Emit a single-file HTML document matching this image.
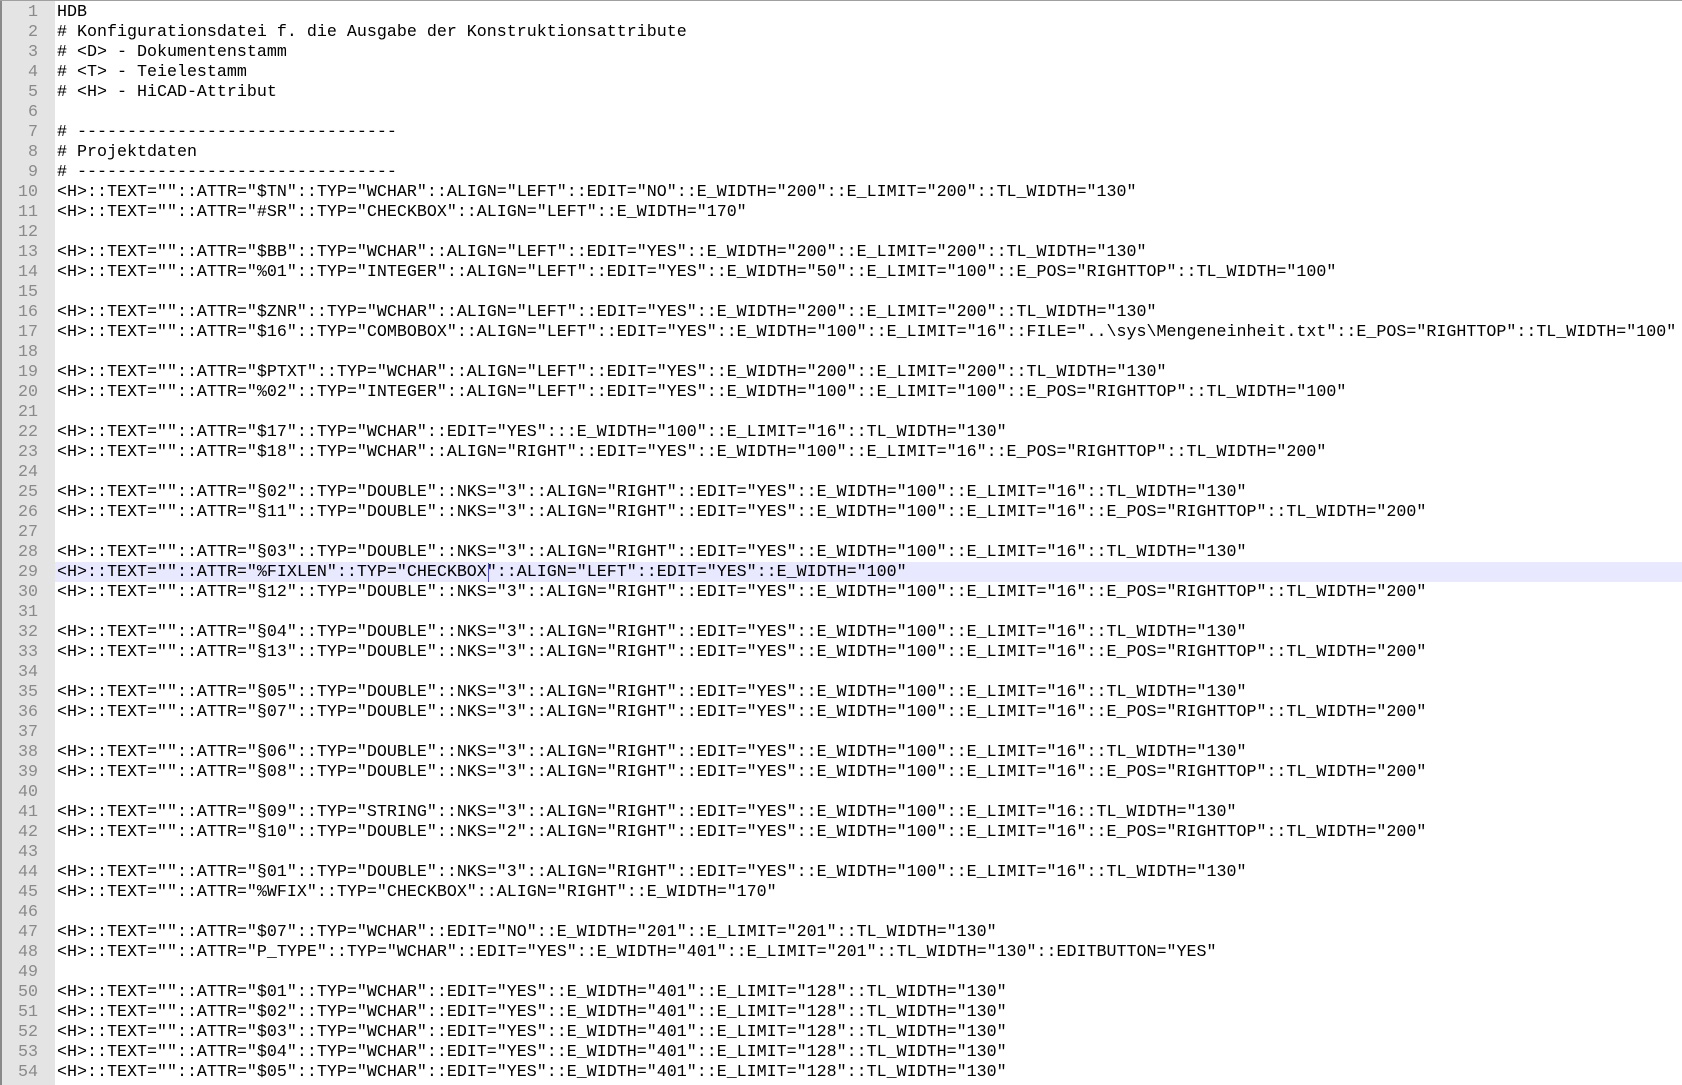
<!DOCTYPE html>
<html><head><meta charset="utf-8">
<style>
html,body{margin:0;padding:0;background:#fff;width:1682px;height:1085px;overflow:hidden}
#wrap{position:relative;width:1682px;height:1085px;border-top:1px solid #a0a0a0;box-sizing:border-box}
#gut{position:absolute;left:0;top:0;width:55px;height:1085px;background:#e4e4e4;border-left:2px solid #8a8a8a;box-sizing:border-box}
.ln,.tx{font-family:"Liberation Mono","Courier New",monospace;font-size:16.67px;line-height:20px;white-space:pre;margin:0}
#nums{position:absolute;left:0;top:2px;width:38px;text-align:right;color:#8a8a8a}
#hl{position:absolute;left:55px;top:561px;width:1627px;height:20px;background:#e8e8ff}
#code{position:absolute;left:57px;top:2px;color:#000}
#cur{position:absolute;left:488px;top:562px;width:1px;height:19px;background:#5050c0}
</style></head><body><div id="wrap">
<div id="gut"></div>
<div id="hl"></div>
<pre class="ln" id="nums">1
2
3
4
5
6
7
8
9
10
11
12
13
14
15
16
17
18
19
20
21
22
23
24
25
26
27
28
29
30
31
32
33
34
35
36
37
38
39
40
41
42
43
44
45
46
47
48
49
50
51
52
53
54</pre>
<pre class="tx" id="code">HDB
# Konfigurationsdatei f. die Ausgabe der Konstruktionsattribute
# &lt;D&gt; - Dokumentenstamm
# &lt;T&gt; - Teielestamm
# &lt;H&gt; - HiCAD-Attribut

# --------------------------------
# Projektdaten
# --------------------------------
&lt;H&gt;::TEXT=""::ATTR="$TN"::TYP="WCHAR"::ALIGN="LEFT"::EDIT="NO"::E_WIDTH="200"::E_LIMIT="200"::TL_WIDTH="130"
&lt;H&gt;::TEXT=""::ATTR="#SR"::TYP="CHECKBOX"::ALIGN="LEFT"::E_WIDTH="170"

&lt;H&gt;::TEXT=""::ATTR="$BB"::TYP="WCHAR"::ALIGN="LEFT"::EDIT="YES"::E_WIDTH="200"::E_LIMIT="200"::TL_WIDTH="130"
&lt;H&gt;::TEXT=""::ATTR="%01"::TYP="INTEGER"::ALIGN="LEFT"::EDIT="YES"::E_WIDTH="50"::E_LIMIT="100"::E_POS="RIGHTTOP"::TL_WIDTH="100"

&lt;H&gt;::TEXT=""::ATTR="$ZNR"::TYP="WCHAR"::ALIGN="LEFT"::EDIT="YES"::E_WIDTH="200"::E_LIMIT="200"::TL_WIDTH="130"
&lt;H&gt;::TEXT=""::ATTR="$16"::TYP="COMBOBOX"::ALIGN="LEFT"::EDIT="YES"::E_WIDTH="100"::E_LIMIT="16"::FILE="..\sys\Mengeneinheit.txt"::E_POS="RIGHTTOP"::TL_WIDTH="100"

&lt;H&gt;::TEXT=""::ATTR="$PTXT"::TYP="WCHAR"::ALIGN="LEFT"::EDIT="YES"::E_WIDTH="200"::E_LIMIT="200"::TL_WIDTH="130"
&lt;H&gt;::TEXT=""::ATTR="%02"::TYP="INTEGER"::ALIGN="LEFT"::EDIT="YES"::E_WIDTH="100"::E_LIMIT="100"::E_POS="RIGHTTOP"::TL_WIDTH="100"

&lt;H&gt;::TEXT=""::ATTR="$17"::TYP="WCHAR"::EDIT="YES":::E_WIDTH="100"::E_LIMIT="16"::TL_WIDTH="130"
&lt;H&gt;::TEXT=""::ATTR="$18"::TYP="WCHAR"::ALIGN="RIGHT"::EDIT="YES"::E_WIDTH="100"::E_LIMIT="16"::E_POS="RIGHTTOP"::TL_WIDTH="200"

&lt;H&gt;::TEXT=""::ATTR="§02"::TYP="DOUBLE"::NKS="3"::ALIGN="RIGHT"::EDIT="YES"::E_WIDTH="100"::E_LIMIT="16"::TL_WIDTH="130"
&lt;H&gt;::TEXT=""::ATTR="§11"::TYP="DOUBLE"::NKS="3"::ALIGN="RIGHT"::EDIT="YES"::E_WIDTH="100"::E_LIMIT="16"::E_POS="RIGHTTOP"::TL_WIDTH="200"

&lt;H&gt;::TEXT=""::ATTR="§03"::TYP="DOUBLE"::NKS="3"::ALIGN="RIGHT"::EDIT="YES"::E_WIDTH="100"::E_LIMIT="16"::TL_WIDTH="130"
&lt;H&gt;::TEXT=""::ATTR="%FIXLEN"::TYP="CHECKBOX"::ALIGN="LEFT"::EDIT="YES"::E_WIDTH="100"
&lt;H&gt;::TEXT=""::ATTR="§12"::TYP="DOUBLE"::NKS="3"::ALIGN="RIGHT"::EDIT="YES"::E_WIDTH="100"::E_LIMIT="16"::E_POS="RIGHTTOP"::TL_WIDTH="200"

&lt;H&gt;::TEXT=""::ATTR="§04"::TYP="DOUBLE"::NKS="3"::ALIGN="RIGHT"::EDIT="YES"::E_WIDTH="100"::E_LIMIT="16"::TL_WIDTH="130"
&lt;H&gt;::TEXT=""::ATTR="§13"::TYP="DOUBLE"::NKS="3"::ALIGN="RIGHT"::EDIT="YES"::E_WIDTH="100"::E_LIMIT="16"::E_POS="RIGHTTOP"::TL_WIDTH="200"

&lt;H&gt;::TEXT=""::ATTR="§05"::TYP="DOUBLE"::NKS="3"::ALIGN="RIGHT"::EDIT="YES"::E_WIDTH="100"::E_LIMIT="16"::TL_WIDTH="130"
&lt;H&gt;::TEXT=""::ATTR="§07"::TYP="DOUBLE"::NKS="3"::ALIGN="RIGHT"::EDIT="YES"::E_WIDTH="100"::E_LIMIT="16"::E_POS="RIGHTTOP"::TL_WIDTH="200"

&lt;H&gt;::TEXT=""::ATTR="§06"::TYP="DOUBLE"::NKS="3"::ALIGN="RIGHT"::EDIT="YES"::E_WIDTH="100"::E_LIMIT="16"::TL_WIDTH="130"
&lt;H&gt;::TEXT=""::ATTR="§08"::TYP="DOUBLE"::NKS="3"::ALIGN="RIGHT"::EDIT="YES"::E_WIDTH="100"::E_LIMIT="16"::E_POS="RIGHTTOP"::TL_WIDTH="200"

&lt;H&gt;::TEXT=""::ATTR="§09"::TYP="STRING"::NKS="3"::ALIGN="RIGHT"::EDIT="YES"::E_WIDTH="100"::E_LIMIT="16::TL_WIDTH="130"
&lt;H&gt;::TEXT=""::ATTR="§10"::TYP="DOUBLE"::NKS="2"::ALIGN="RIGHT"::EDIT="YES"::E_WIDTH="100"::E_LIMIT="16"::E_POS="RIGHTTOP"::TL_WIDTH="200"

&lt;H&gt;::TEXT=""::ATTR="§01"::TYP="DOUBLE"::NKS="3"::ALIGN="RIGHT"::EDIT="YES"::E_WIDTH="100"::E_LIMIT="16"::TL_WIDTH="130"
&lt;H&gt;::TEXT=""::ATTR="%WFIX"::TYP="CHECKBOX"::ALIGN="RIGHT"::E_WIDTH="170"

&lt;H&gt;::TEXT=""::ATTR="$07"::TYP="WCHAR"::EDIT="NO"::E_WIDTH="201"::E_LIMIT="201"::TL_WIDTH="130"
&lt;H&gt;::TEXT=""::ATTR="P_TYPE"::TYP="WCHAR"::EDIT="YES"::E_WIDTH="401"::E_LIMIT="201"::TL_WIDTH="130"::EDITBUTTON="YES"

&lt;H&gt;::TEXT=""::ATTR="$01"::TYP="WCHAR"::EDIT="YES"::E_WIDTH="401"::E_LIMIT="128"::TL_WIDTH="130"
&lt;H&gt;::TEXT=""::ATTR="$02"::TYP="WCHAR"::EDIT="YES"::E_WIDTH="401"::E_LIMIT="128"::TL_WIDTH="130"
&lt;H&gt;::TEXT=""::ATTR="$03"::TYP="WCHAR"::EDIT="YES"::E_WIDTH="401"::E_LIMIT="128"::TL_WIDTH="130"
&lt;H&gt;::TEXT=""::ATTR="$04"::TYP="WCHAR"::EDIT="YES"::E_WIDTH="401"::E_LIMIT="128"::TL_WIDTH="130"
&lt;H&gt;::TEXT=""::ATTR="$05"::TYP="WCHAR"::EDIT="YES"::E_WIDTH="401"::E_LIMIT="128"::TL_WIDTH="130"</pre>
<div id="cur"></div>
</div></body></html>
